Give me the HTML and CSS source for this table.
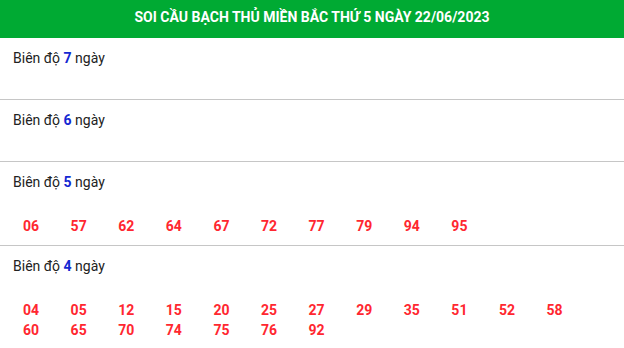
FILE: index.html
```html
<!DOCTYPE html>
<html lang="vi">
<head>
<meta charset="utf-8">
<link rel="stylesheet" href="styles.css">
</head>
<body>
<div class="box">
  <h2 class="head">SOI CẦU BẠCH THỦ MIỀN BẮC THỨ 5 NGÀY 22/06/2023</h2>
  <div class="sec">
    <div class="ttl">Biên độ <b>7</b> ngày</div>
    <div class="nums"></div>
  </div>
  <div class="sec">
    <div class="ttl">Biên độ <b>6</b> ngày</div>
    <div class="nums"></div>
  </div>
  <div class="sec">
    <div class="ttl">Biên độ <b>5</b> ngày</div>
    <div class="nums"><span>06</span><span>57</span><span>62</span><span>64</span><span>67</span><span>72</span><span>77</span><span>79</span><span>94</span><span>95</span></div>
  </div>
  <div class="sec">
    <div class="ttl">Biên độ <b>4</b> ngày</div>
    <div class="nums"><span>04</span><span>05</span><span>12</span><span>15</span><span>20</span><span>25</span><span>27</span><span>29</span><span>35</span><span>51</span><span>52</span><span>58</span><span>60</span><span>65</span><span>70</span><span>74</span><span>75</span><span>76</span><span>92</span></div>
  </div>
</div>
</body>
</html>
```
FILE: styles.css
```css
html, body {
  margin: 0;
  padding: 0;
  background: #fff;
}
body {
  font-family: Roboto, "Noto Sans", sans-serif;
  color: #222;
}
.head {
  margin: 0;
  height: 38px;
  line-height: 35px;
  background: #00aa33;
  color: #fff;
  font-size: 14px;
  font-weight: 700;
  text-align: center;
}
.sec {
  padding: 10px 0 8px 13px;
  border-bottom: 1px solid #c6c6c6;
}
.ttl {
  font-size: 14px;
  line-height: 20px;
}
.ttl b {
  color: #1428d2;
}
.nums {
  display: flex;
  flex-wrap: wrap;
  margin-top: 23px;
  padding-left: 10px;
  padding-right: 16px;
}
.nums:not(:empty) {
  padding-top: 1px;
  padding-bottom: 1px;
}
.nums span {
  width: 47.6px;
  font-size: 14px;
  line-height: 20px;
  font-weight: 700;
  color: #ff2730;
}
```
